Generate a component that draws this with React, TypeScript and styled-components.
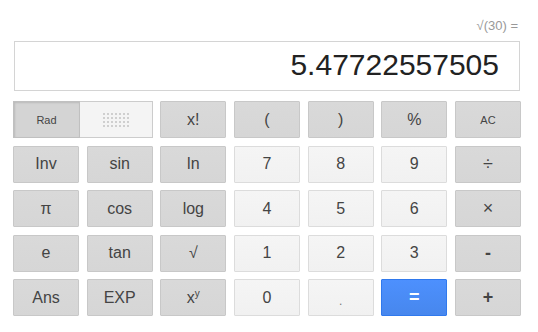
import React from "react";
import styled, { createGlobalStyle, css } from "styled-components";

const GlobalStyle = createGlobalStyle`
  body {
    margin: 0;
    background: #fff;
    font-family: "Liberation Sans", Arial, sans-serif;
  }
`;

const CalcWrapper = styled.div`
  width: 508px;
  padding: 0 17px 0 13px;
`;

const Expression = styled.div`
  height: 41px;
  box-sizing: border-box;
  display: flex;
  justify-content: flex-end;
  align-items: flex-end;
  padding: 0 3px 8px 0;
  font-size: 13px;
  line-height: 14px;
  color: #999;
`;

const Display = styled.div`
  height: 50px;
  box-sizing: border-box;
  margin: 0 1px;
  padding: 8px 20px 0 0;
  border: 1px solid #d4d4d4;
  text-align: right;
  font-size: 30px;
  line-height: 30px;
  color: #222;
`;

const Keypad = styled.div`
  margin-top: 10px;
  display: grid;
  grid-template-columns: repeat(7, 1fr);
  grid-auto-rows: 37px;
  column-gap: 7.67px;
  row-gap: 7.5px;
`;

type Variant = "fn" | "num" | "eq";

const variants = {
  fn: css`
    background: linear-gradient(#d9d9d9, #d6d6d6);
    border: 1px solid #c8c8c8;
    color: #444;
  `,
  num: css`
    background: linear-gradient(#f5f5f5, #f1f1f1);
    border: 1px solid #dcdcdc;
    color: #444;
  `,
  eq: css`
    background: linear-gradient(#4d90fe, #4787ed);
    border: 1px solid #3079ed;
    color: #fff;
  `,
};

const Key = styled.button<{ $variant: Variant; $small?: boolean; $bold?: boolean }>`
  box-sizing: border-box;
  margin: 0;
  padding: 0;
  border-radius: 1px;
  font-family: "Liberation Sans", Arial, sans-serif;
  font-size: ${(p) => (p.$small ? "11px" : "16px")};
  font-weight: ${(p) => (p.$bold ? "bold" : "normal")};
  display: flex;
  align-items: center;
  justify-content: center;
  ${(p) => variants[p.$variant]}

  sup {
    font-size: 10px;
    vertical-align: 6px;
    line-height: 0;
  }
`;

const Toggle = styled.div`
  grid-column: span 2;
  display: grid;
  grid-template-columns: 67px 1fr;
`;

const RadHalf = styled.div`
  box-sizing: border-box;
  display: flex;
  align-items: center;
  justify-content: center;
  background: #d4d4d4;
  border: 1px solid #c0c0c0;
  box-shadow: inset 1px 1px 2px rgba(0, 0, 0, 0.12);
  font-size: 11px;
  color: #444;
`;

const DegHalf = styled.div`
  box-sizing: border-box;
  display: flex;
  align-items: center;
  justify-content: center;
  background: #f4f4f4;
  border: 1px solid #cccccc;
  border-left: none;
`;

const Dots = styled.div`
  display: grid;
  grid-template-columns: repeat(7, 2px);
  grid-auto-rows: 2px;
  gap: 2px;
`;

const Dot = styled.span`
  background: #cfcfcf;
`;

const Period = styled.span`
  font-size: 12px;
  color: #777;
  margin-top: 6px;
`;

const BigSign = styled.span`
  font-size: 18px;
`;

type KeyDef = { label: React.ReactNode; v: Variant; small?: boolean; bold?: boolean };

const rows: KeyDef[][] = [
  [
    { label: "x!", v: "fn" },
    { label: "(", v: "fn" },
    { label: ")", v: "fn" },
    { label: "%", v: "fn" },
    { label: "AC", v: "fn", small: true },
  ],
  [
    { label: "Inv", v: "fn" },
    { label: "sin", v: "fn" },
    { label: "ln", v: "fn" },
    { label: "7", v: "num" },
    { label: "8", v: "num" },
    { label: "9", v: "num" },
    { label: <BigSign>÷</BigSign>, v: "fn" },
  ],
  [
    { label: "π", v: "fn" },
    { label: "cos", v: "fn" },
    { label: "log", v: "fn" },
    { label: "4", v: "num" },
    { label: "5", v: "num" },
    { label: "6", v: "num" },
    { label: <BigSign>×</BigSign>, v: "fn" },
  ],
  [
    { label: "e", v: "fn" },
    { label: "tan", v: "fn" },
    { label: "√", v: "fn" },
    { label: "1", v: "num" },
    { label: "2", v: "num" },
    { label: "3", v: "num" },
    { label: <BigSign>-</BigSign>, v: "fn", bold: true },
  ],
  [
    { label: "Ans", v: "fn" },
    { label: "EXP", v: "fn" },
    {
      label: (
        <span>
          x<sup>y</sup>
        </span>
      ),
      v: "fn",
    },
    { label: "0", v: "num" },
    { label: <Period>.</Period>, v: "num" },
    { label: <BigSign>=</BigSign>, v: "eq", bold: true },
    { label: <BigSign>+</BigSign>, v: "fn", bold: true },
  ],
];

const App = () => {
  return (
    <CalcWrapper>
      <GlobalStyle />
      <Expression>√(30) =</Expression>
      <Display>5.47722557505</Display>
      <Keypad>
        <Toggle>
          <RadHalf>Rad</RadHalf>
          <DegHalf>
            <Dots>
              {Array.from({ length: 28 }).map((_, i) => (
                <Dot key={i} />
              ))}
            </Dots>
          </DegHalf>
        </Toggle>
        {rows.flat().map((k, i) => (
          <Key key={i} $variant={k.v} $small={k.small} $bold={k.bold}>
            {k.label}
          </Key>
        ))}
      </Keypad>
    </CalcWrapper>
  );
};

export default App;
